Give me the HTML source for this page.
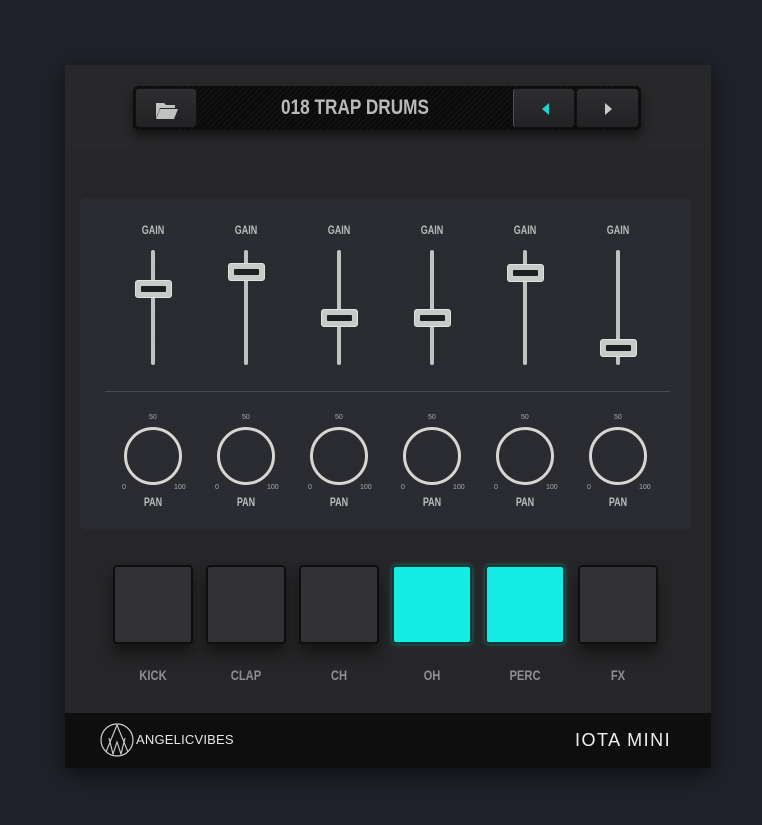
<!DOCTYPE html>
<html><head><meta charset="utf-8"><style>
*{margin:0;padding:0;box-sizing:border-box}
body{width:762px;height:825px;background:#1f222a;position:relative;overflow:hidden;font-family:"Liberation Sans",sans-serif}
.abs{position:absolute}
#panel{left:65px;top:65px;width:646px;height:703px;background:#262628;box-shadow:0 6px 22px rgba(0,0,0,.6)}
#top{left:65px;top:65px;width:646px;height:85px;background:#28282a}
#bar{left:133px;top:86px;width:508px;height:44px;background:#0a0a0b;border-radius:5px;box-shadow:0 6px 10px rgba(0,0,0,.5);background-image:repeating-linear-gradient(135deg,#0b0b0c 0 3px,#151516 3px 4px)}
.btn{position:absolute;top:2px;height:40px;background:linear-gradient(#2e2e31,#222224);border-radius:4px;border:1px solid #111}
.title{position:absolute;left:64px;width:316px;top:0;height:44px;text-align:center;color:#b8bab8;font:bold 21px/44px "Liberation Sans Narrow","Liberation Sans",sans-serif;transform:scaleX(.82)}
#inner{left:80px;top:198px;width:611px;height:332px;background:#2a2b30;border-radius:7px;background-image:repeating-linear-gradient(0deg,#2a2b30 0 2px,#2c2d32 2px 3px)}
.lbl{position:absolute;width:60px;text-align:center;color:#b9bdb9;font:bold 12px "Liberation Sans Narrow","Liberation Sans",sans-serif;transform:scaleX(.75)}
.track{position:absolute;width:4px;background:#bfc3bf;top:250px;height:115px;border-radius:2px}
.hdl{position:absolute;width:37px;height:18px;background:#c5cbc6;border-radius:3px;border:1px solid #e0e4e0}
.hdl:after{content:"";position:absolute;left:5px;right:5px;top:5px;height:6px;background:#1e1f22;border-radius:1px}
.knob{position:absolute;width:58px;height:58px;border-radius:50%;border:3px solid #d8d6d2;top:427px}
.sm{position:absolute;color:#aaa;font-size:7px}
.pad{position:absolute;top:565px;width:80px;height:79px;border-radius:4px;background:#323236;border:2px solid #0e0e0f;box-shadow:0 10px 14px rgba(0,0,0,.45)}
.pad.on{background:#14ede5;border-color:#0a3a38;box-shadow:0 0 4px rgba(20,237,229,.4)}
.plbl{position:absolute;top:667px;width:80px;text-align:center;color:#8d8e92;font:bold 14px "Liberation Sans Narrow","Liberation Sans",sans-serif;transform:scaleX(.8)}
#foot{left:65px;top:713px;width:646px;height:55px;background:#0e0e0f}
</style></head><body>
<div id="panel" class="abs"></div>
<div id="top" class="abs"></div>
<div id="bar" class="abs">
 <div class="btn" style="left:2px;width:62px"><svg width="62" height="40"><path d="M20 14h8l2 2h9v3H24l-4 10z" fill="#bfc3bf"/><path d="M24 20h18l-4 10H20z" fill="#bfc3bf"/></svg></div>
 <div class="title">018 TRAP DRUMS</div>
 <div class="btn" style="left:380px;width:62px;border-left:1px solid #1a6b68"><svg width="62" height="40"><path d="M35 14v12l-7-6z" fill="#17d6cf"/></svg></div>
 <div class="btn" style="left:443px;width:63px"><svg width="63" height="40"><path d="M28 14v12l7-6z" fill="#c8ccc8"/></svg></div>
</div>
<div id="inner" class="abs"></div>
<div class="abs" style="left:105px;top:391px;width:565px;height:1px;background:#4a4b50"></div>
<div id="ctl"></div>
<div id="foot" class="abs">
 <svg class="abs" style="left:34px;top:9px" width="40" height="38"><circle cx="18" cy="18" r="16" fill="none" stroke="#cfcfcf" stroke-width="1.2"/><path d="M7 30L18 3L29 30M10 16L14 32L18 20L22 32L26 16" fill="none" stroke="#cfcfcf" stroke-width="1.1"/></svg>
 <div class="abs" style="left:71px;top:19px;color:#e6e6e6;font-size:13px;letter-spacing:.2px">ANGELICVIBES</div>
 <div class="abs" style="left:510px;top:17px;color:#f0f0f0;font-size:18px;letter-spacing:1.5px">IOTA MINI</div>
</div>
<script>
var xs=[153,246,339,432,525,618],hy=[289,272,318,318,273,348],lab=["KICK","CLAP","CH","OH","PERC","FX"],h="";
for(var i=0;i<6;i++){var x=xs[i];
h+='<div class="lbl" style="left:'+(x-30)+'px;top:223px">GAIN</div>';
h+='<div class="track" style="left:'+(x-2)+'px"></div>';
h+='<div class="hdl" style="left:'+(x-18)+'px;top:'+(hy[i]-9)+'px"></div>';
h+='<div class="sm" style="left:'+(x-4)+'px;top:414px">50</div>';
h+='<div class="knob" style="left:'+(x-29)+'px"></div>';
h+='<div class="sm" style="left:'+(x-31)+'px;top:484px">0</div>';
h+='<div class="sm" style="left:'+(x+21)+'px;top:484px">100</div>';
h+='<div class="lbl" style="left:'+(x-30)+'px;top:495px">PAN</div>';
h+='<div class="pad'+(i==3||i==4?' on':'')+'" style="left:'+(x-40)+'px"></div>';
h+='<div class="plbl" style="left:'+(x-40)+'px">'+lab[i]+'</div>';}
document.getElementById('ctl').innerHTML=h;
</script>
</body></html>
